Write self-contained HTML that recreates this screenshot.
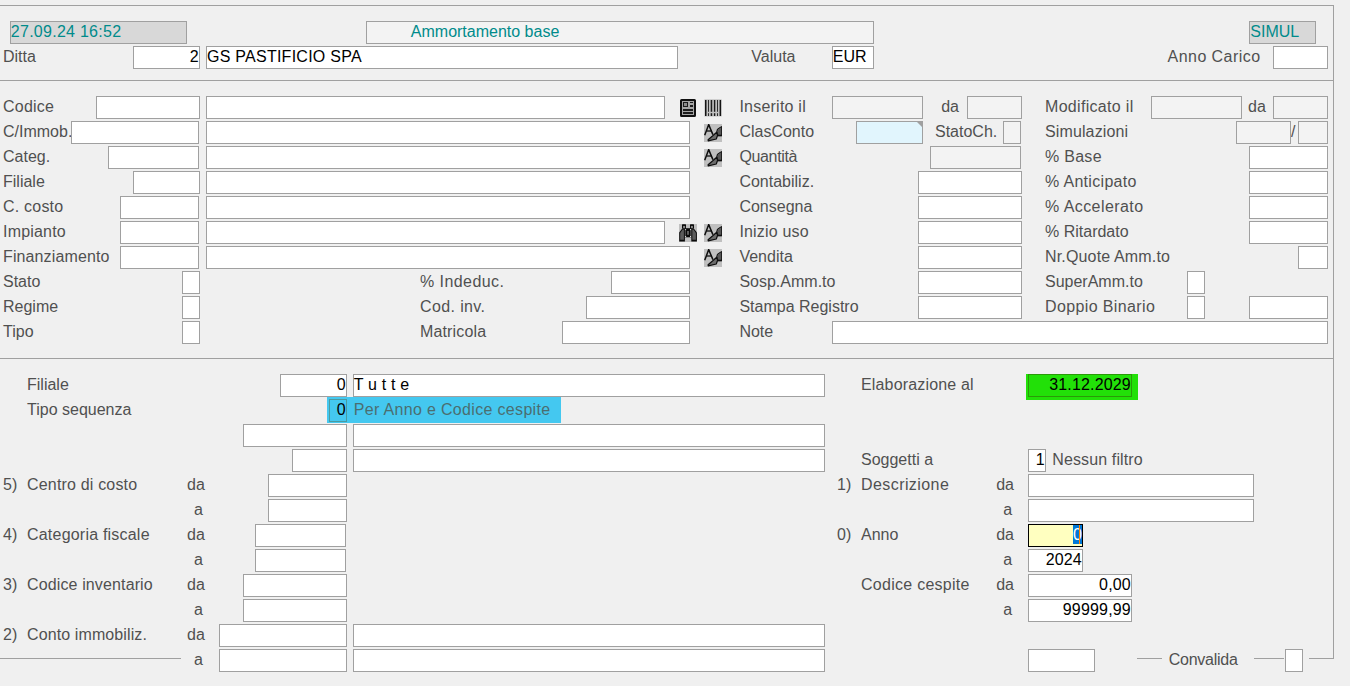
<!DOCTYPE html>
<html lang="it"><head><meta charset="utf-8"><title>Ammortamento base</title>
<style>
html,body{margin:0;padding:0}
body{width:1350px;height:686px;background:#f0f0f0;position:relative;overflow:hidden;font-family:"Liberation Sans",sans-serif;font-size:16px;color:#505050}
.b{position:absolute;box-sizing:border-box;height:23px;border:1px solid #a0a0a0;background:#fff;color:#000;line-height:19px;padding:0 1px 0 1px;white-space:nowrap;overflow:hidden}
.r{text-align:right;padding-right:.1px;letter-spacing:.17px}
.l{position:absolute;height:23px;line-height:21px;white-space:nowrap}
.h{position:absolute;height:1px;background:#a0a0a0}
.v{position:absolute;width:1px;background:#a0a0a0}
.i{position:absolute}
</style></head><body>
<div class="h" style="left:0px;top:5px;width:1334px"></div>
<div class="h" style="left:0px;top:80px;width:1334px"></div>
<div class="h" style="left:0px;top:358px;width:1334px"></div>
<div class="h" style="left:0px;top:658px;width:181px"></div>
<div class="h" style="left:1137px;top:658px;width:25px"></div>
<div class="h" style="left:1254px;top:658px;width:30px"></div>
<div class="h" style="left:1309px;top:658px;width:25px"></div>
<div class="v" style="left:1333px;top:5px;height:654px"></div>
<div class="i" style="left:327px;top:397px;width:234px;height:26px;background:#44c8f0"></div>
<div class="b r" style="left:329px;top:399px;width:18px;background:#44c8f0;border-color:#4b9aa0">0</div>
<div class="i" style="left:1026px;top:374px;width:112px;height:26px;background:#22e008"></div>
<div class="b r" style="left:1028px;top:374px;width:104px;background:#22e008;border-color:#2a9a08">31.12.2029</div>
<div class="b" style="left:1028px;top:524px;width:55px;background:#ffffc0;border-color:#000;padding:0"><span style="position:absolute;right:0;top:0;width:9px;height:19px;background:#0078d7;color:#fff;text-align:right">0</span><span style="position:absolute;left:50px;top:0;width:1px;height:19px;background:#ff8000"></span></div>
<div class="l" style="left:3px;top:46px">Ditta</div>
<div class="l" style="left:751.3px;top:46px">Valuta</div>
<div class="l" style="left:1167.6px;top:46px;letter-spacing:0.44px">Anno Carico</div>
<div class="l" style="left:3px;top:96px;letter-spacing:0.24px">Codice</div>
<div class="l" style="left:3px;top:121px">C/Immob.</div>
<div class="l" style="left:3px;top:146px">Categ.</div>
<div class="l" style="left:3px;top:171px">Filiale</div>
<div class="l" style="left:3px;top:196px;letter-spacing:0.21px">C. costo</div>
<div class="l" style="left:3px;top:221px;letter-spacing:0.20px">Impianto</div>
<div class="l" style="left:3px;top:246px;letter-spacing:0.12px">Finanziamento</div>
<div class="l" style="left:3px;top:271px">Stato</div>
<div class="l" style="left:3px;top:296px">Regime</div>
<div class="l" style="left:3px;top:321px">Tipo</div>
<div class="l" style="left:420px;top:271px;letter-spacing:0.43px">% Indeduc.</div>
<div class="l" style="left:420px;top:296px;letter-spacing:0.38px">Cod. inv.</div>
<div class="l" style="left:420px;top:321px;letter-spacing:0.15px">Matricola</div>
<div class="l" style="left:739.4px;top:96px;letter-spacing:0.23px">Inserito il</div>
<div class="l" style="left:739.4px;top:121px">ClasConto</div>
<div class="l" style="left:739.4px;top:146px;letter-spacing:-0.34px">Quantità</div>
<div class="l" style="left:739.4px;top:171px">Contabiliz.</div>
<div class="l" style="left:739.4px;top:196px">Consegna</div>
<div class="l" style="left:739.4px;top:221px;letter-spacing:0.18px">Inizio uso</div>
<div class="l" style="left:739.4px;top:246px">Vendita</div>
<div class="l" style="left:739.4px;top:271px">Sosp.Amm.to</div>
<div class="l" style="left:739.4px;top:296px">Stampa Registro</div>
<div class="l" style="left:739.4px;top:321px">Note</div>
<div class="l" style="left:941.2px;top:96px">da</div>
<div class="l" style="left:935px;top:121px">StatoCh.</div>
<div class="l" style="left:1045px;top:96px;letter-spacing:0.31px">Modificato il</div>
<div class="l" style="left:1045px;top:121px;letter-spacing:0.12px">Simulazioni</div>
<div class="l" style="left:1045px;top:146px;letter-spacing:0.28px">% Base</div>
<div class="l" style="left:1045px;top:171px;letter-spacing:0.31px">% Anticipato</div>
<div class="l" style="left:1045px;top:196px;letter-spacing:0.43px">% Accelerato</div>
<div class="l" style="left:1045px;top:221px">% Ritardato</div>
<div class="l" style="left:1045px;top:246px;letter-spacing:0.16px">Nr.Quote Amm.to</div>
<div class="l" style="left:1045px;top:271px">SuperAmm.to</div>
<div class="l" style="left:1045px;top:296px;letter-spacing:0.38px">Doppio Binario</div>
<div class="l" style="left:1248.0px;top:96px">da</div>
<div class="l" style="left:1291px;top:121px">/</div>
<div class="l" style="left:27px;top:374px">Filiale</div>
<div class="l" style="left:27px;top:399px">Tipo sequenza</div>
<div class="l" style="left:3px;top:474px">5)</div>
<div class="l" style="left:27px;top:474px;letter-spacing:0.18px">Centro di costo</div>
<div class="l" style="left:187.0px;top:474px">da</div>
<div class="l" style="left:194.0px;top:499px">a</div>
<div class="l" style="left:3px;top:524px">4)</div>
<div class="l" style="left:27px;top:524px;letter-spacing:0.21px">Categoria fiscale</div>
<div class="l" style="left:187.0px;top:524px">da</div>
<div class="l" style="left:194.0px;top:549px">a</div>
<div class="l" style="left:3px;top:574px">3)</div>
<div class="l" style="left:27px;top:574px;letter-spacing:0.13px">Codice inventario</div>
<div class="l" style="left:187.0px;top:574px">da</div>
<div class="l" style="left:194.0px;top:599px">a</div>
<div class="l" style="left:3px;top:624px">2)</div>
<div class="l" style="left:27px;top:624px;letter-spacing:0.11px">Conto immobiliz.</div>
<div class="l" style="left:187.0px;top:624px">da</div>
<div class="l" style="left:194.0px;top:649px">a</div>
<div class="l" style="left:861px;top:374px;letter-spacing:0.16px">Elaborazione al</div>
<div class="l" style="left:861px;top:449px">Soggetti a</div>
<div class="l" style="left:1052.3px;top:449px;letter-spacing:0.12px">Nessun filtro</div>
<div class="l" style="left:837px;top:474px">1)</div>
<div class="l" style="left:861px;top:474px;letter-spacing:0.42px">Descrizione</div>
<div class="l" style="left:996.2px;top:474px">da</div>
<div class="l" style="left:1003.3px;top:499px">a</div>
<div class="l" style="left:837px;top:524px">0)</div>
<div class="l" style="left:861px;top:524px">Anno</div>
<div class="l" style="left:996.2px;top:524px">da</div>
<div class="l" style="left:1003.3px;top:549px">a</div>
<div class="l" style="left:861px;top:574px;letter-spacing:0.27px">Codice cespite</div>
<div class="l" style="left:996.2px;top:574px">da</div>
<div class="l" style="left:1003.3px;top:599px">a</div>
<div class="l" style="left:1168.7px;top:649px;letter-spacing:-0.25px">Convalida</div>
<div class="b" style="left:10px;top:21px;width:177px;background:#d8d8d8"></div>
<div class="b" style="left:366px;top:21px;width:508px;background:#f3f3f3;color:#008b8b"></div>
<div class="b" style="left:1249px;top:21px;width:67px;background:#d8d8d8"></div>
<div class="b r" style="left:133px;top:46px;width:67px">2</div>
<div class="b" style="left:206px;top:46px;width:472px"></div>
<div class="b" style="left:832px;top:46px;width:42px"></div>
<div class="b" style="left:1273px;top:46px;width:55px"></div>
<div class="b" style="left:96px;top:96px;width:104px"></div>
<div class="b" style="left:71px;top:121px;width:128px"></div>
<div class="b" style="left:108px;top:146px;width:91px"></div>
<div class="b" style="left:133px;top:171px;width:67px"></div>
<div class="b" style="left:120px;top:196px;width:79px"></div>
<div class="b" style="left:120px;top:221px;width:79px"></div>
<div class="b" style="left:120px;top:246px;width:79px"></div>
<div class="b" style="left:182px;top:271px;width:18px"></div>
<div class="b" style="left:182px;top:296px;width:18px"></div>
<div class="b" style="left:182px;top:321px;width:18px"></div>
<div class="b" style="left:206px;top:96px;width:459px"></div>
<div class="b" style="left:206px;top:121px;width:484px"></div>
<div class="b" style="left:206px;top:146px;width:484px"></div>
<div class="b" style="left:206px;top:171px;width:484px"></div>
<div class="b" style="left:206px;top:196px;width:484px"></div>
<div class="b" style="left:206px;top:221px;width:459px"></div>
<div class="b" style="left:206px;top:246px;width:484px"></div>
<div class="b" style="left:611px;top:271px;width:79px"></div>
<div class="b" style="left:586px;top:296px;width:104px"></div>
<div class="b" style="left:562px;top:321px;width:128px"></div>
<div class="b" style="left:832px;top:96px;width:91px;background:#f3f3f3"></div>
<div class="b" style="left:967px;top:96px;width:55px;background:#f3f3f3"></div>
<div class="b" style="left:856px;top:121px;width:67px;background:#e1f5fd"></div>
<div class="b" style="left:1003px;top:121px;width:18px;background:#f3f3f3"></div>
<div class="b" style="left:930px;top:146px;width:91px;background:#f3f3f3"></div>
<div class="b" style="left:918px;top:171px;width:104px"></div>
<div class="b" style="left:918px;top:196px;width:104px"></div>
<div class="b" style="left:918px;top:221px;width:104px"></div>
<div class="b" style="left:918px;top:246px;width:104px"></div>
<div class="b" style="left:918px;top:271px;width:104px"></div>
<div class="b" style="left:918px;top:296px;width:104px"></div>
<div class="b" style="left:832px;top:321px;width:496px"></div>
<div class="b" style="left:1151px;top:96px;width:91px;background:#f3f3f3"></div>
<div class="b" style="left:1273px;top:96px;width:55px;background:#f3f3f3"></div>
<div class="b" style="left:1236px;top:121px;width:55px;background:#f3f3f3"></div>
<div class="b" style="left:1298px;top:121px;width:30px;background:#f3f3f3"></div>
<div class="b" style="left:1249px;top:146px;width:79px"></div>
<div class="b" style="left:1249px;top:171px;width:79px"></div>
<div class="b" style="left:1249px;top:196px;width:79px"></div>
<div class="b" style="left:1249px;top:221px;width:79px"></div>
<div class="b" style="left:1298px;top:246px;width:30px"></div>
<div class="b" style="left:1187px;top:271px;width:18px"></div>
<div class="b" style="left:1187px;top:296px;width:18px"></div>
<div class="b" style="left:1249px;top:296px;width:79px"></div>
<div class="b r" style="left:280px;top:374px;width:67px">0</div>
<div class="b" style="left:353px;top:374px;width:472px"></div>
<div class="b" style="left:243px;top:424px;width:104px"></div>
<div class="b" style="left:353px;top:424px;width:472px"></div>
<div class="b" style="left:292px;top:449px;width:55px"></div>
<div class="b" style="left:353px;top:449px;width:472px"></div>
<div class="b" style="left:268px;top:474px;width:79px"></div>
<div class="b" style="left:268px;top:499px;width:79px"></div>
<div class="b" style="left:255px;top:524px;width:91px"></div>
<div class="b" style="left:255px;top:549px;width:91px"></div>
<div class="b" style="left:243px;top:574px;width:104px"></div>
<div class="b" style="left:243px;top:599px;width:104px"></div>
<div class="b" style="left:219px;top:624px;width:128px"></div>
<div class="b" style="left:353px;top:624px;width:472px"></div>
<div class="b" style="left:219px;top:649px;width:128px"></div>
<div class="b" style="left:353px;top:649px;width:472px"></div>
<div class="b r" style="left:1028px;top:449px;width:18px">1</div>
<div class="b" style="left:1028px;top:474px;width:226px"></div>
<div class="b" style="left:1028px;top:499px;width:226px"></div>
<div class="b r" style="left:1028px;top:549px;width:55px">2024</div>
<div class="b r" style="left:1028px;top:574px;width:104px">0,00</div>
<div class="b r" style="left:1028px;top:599px;width:104px">99999,99</div>
<div class="b" style="left:1028px;top:649px;width:67px"></div>
<div class="b" style="left:1285px;top:649px;width:18px"></div>
<div class="l" style="left:410.8px;top:21px;color:#008b8b">Ammortamento base</div>
<div class="l" style="left:10.8px;top:21px;color:#008b8b;letter-spacing:0.27px">27.09.24 16:52</div>
<div class="l" style="left:1250.3px;top:21px;color:#008b8b">SIMUL</div>
<div class="l" style="left:207.0px;top:46px;color:#000;letter-spacing:0.25px">GS PASTIFICIO SPA</div>
<div class="l" style="left:832.8px;top:46px;color:#000">EUR</div>
<div class="l" style="left:353.7px;top:399px;color:#4b6e70;letter-spacing:0.33px">Per Anno e Codice cespite</div>
<div class="l" style="left:353.7px;top:374px;color:#000;letter-spacing:0.20px">T u t t e</div>
<svg class="i" style="left:680px;top:99px" width="16" height="18" viewBox="0 0 16 18">
<rect x="1" y="1" width="14" height="16" rx="0.5" fill="#a6a6a6" stroke="#101010" stroke-width="2"/>
<rect x="3.5" y="3.5" width="4" height="4" fill="#8c8c8c" stroke="#1c1c1c" stroke-width="1"/>
<rect x="10" y="3" width="3" height="1" fill="#1c1c1c"/>
<rect x="10" y="6" width="3" height="2" fill="#1c1c1c"/>
<rect x="3" y="10" width="10" height="2" fill="#1c1c1c"/>
<rect x="3" y="13" width="10" height="2" fill="#1c1c1c"/>
</svg>
<svg class="i" style="left:704px;top:99px" width="18" height="18" viewBox="0 0 18 18">
<rect x="0.4" y="0.3" width="17.2" height="17.2" fill="#c0c0c0"/>
<rect x="1" y="1" width="1.5" height="16" fill="#141414"/>
<rect x="15.6" y="1" width="1.5" height="16" fill="#141414"/>
<g fill="#1c1c1c">
<rect x="4.1" y="1" width="0.9" height="11.8"/><rect x="4.1" y="14.2" width="0.9" height="2.8"/>
<rect x="6.7" y="1" width="1.5" height="11.8"/><rect x="6.7" y="14.2" width="1.5" height="2.8"/>
<rect x="9.9" y="1" width="1.4" height="11.8"/><rect x="9.9" y="14.2" width="1.4" height="2.8"/>
<rect x="13" y="1" width="0.9" height="11.8"/><rect x="13" y="14.2" width="0.9" height="2.8"/>
</g></svg>
<svg class="i" style="left:704px;top:124px" width="18" height="18" viewBox="0 0 18 18">
<rect width="18" height="18" fill="#c0c0c0"/>
<path d="M0.7 11.3 L4.7 0.6 L8.9 10.6" fill="none" stroke="#0e0e0e" stroke-width="1.5" stroke-linejoin="miter"/>
<path d="M4.1 1.2 L5.4 1.2 L5.9 3 L4.7 2.2 Z" fill="#0e0e0e"/>
<path d="M2.7 7 H7.5" stroke="#0e0e0e" stroke-width="1.3"/>
<path d="M17.7 2.5 V11.4 H14 L12.7 7.8 L13.5 5 Z" fill="#565656" stroke="#0e0e0e" stroke-width="1" stroke-linejoin="round"/>
<path d="M12.7 8.3 L13.6 11.3 L12.3 15 L4.2 16.9 L4.1 15.7 L8.5 12 Z" fill="#6c6c6c" stroke="#0e0e0e" stroke-width="1.2" stroke-linejoin="round"/>
<path d="M13.6 11.6 H17.9" stroke="#0e0e0e" stroke-width="1.5"/>
</svg>
<svg class="i" style="left:704px;top:149px" width="18" height="18" viewBox="0 0 18 18">
<rect width="18" height="18" fill="#c0c0c0"/>
<path d="M0.7 11.3 L4.7 0.6 L8.9 10.6" fill="none" stroke="#0e0e0e" stroke-width="1.5" stroke-linejoin="miter"/>
<path d="M4.1 1.2 L5.4 1.2 L5.9 3 L4.7 2.2 Z" fill="#0e0e0e"/>
<path d="M2.7 7 H7.5" stroke="#0e0e0e" stroke-width="1.3"/>
<path d="M17.7 2.5 V11.4 H14 L12.7 7.8 L13.5 5 Z" fill="#565656" stroke="#0e0e0e" stroke-width="1" stroke-linejoin="round"/>
<path d="M12.7 8.3 L13.6 11.3 L12.3 15 L4.2 16.9 L4.1 15.7 L8.5 12 Z" fill="#6c6c6c" stroke="#0e0e0e" stroke-width="1.2" stroke-linejoin="round"/>
<path d="M13.6 11.6 H17.9" stroke="#0e0e0e" stroke-width="1.5"/>
</svg>
<svg class="i" style="left:679px;top:224px" width="18" height="18" viewBox="0 0 18 18">
<rect width="18" height="18" fill="#c0c0c0"/>
<rect x="5.9" y="4.2" width="6.4" height="9.1" fill="#0a0a0a"/>
<path d="M3 4.7 L0.2 8.5 V17.6 H5.9 V4.7 Z" fill="#0a0a0a"/>
<path d="M15 4.7 L17.9 8.5 V17.6 H12.3 V4.7 Z" fill="#0a0a0a"/>
<path d="M3.6 5.6 L1.2 9 V15.7 H4.9 V5.6 Z" fill="#5c5c5c"/>
<path d="M14.4 5.6 L16.9 9 V15.7 H13.3 V5.6 Z" fill="#5c5c5c"/>
<rect x="3" y="0.2" width="4" height="4.6" rx="0.5" fill="#0a0a0a"/>
<rect x="11" y="0.2" width="4" height="4.6" rx="0.5" fill="#0a0a0a"/>
<rect x="4.1" y="1.9" width="2" height="2.1" fill="#8a8a8a"/>
<rect x="11.9" y="1.9" width="2" height="2.1" fill="#8a8a8a"/>
<rect x="8.1" y="7" width="1.8" height="3.8" fill="#686868"/>
<g fill="#606060"><rect x="6.3" y="5.6" width="0.7" height="6.6"/><rect x="11.2" y="5.6" width="0.7" height="6.6"/></g>
<g fill="#e8e8e8"><rect x="6.1" y="5.1" width="1" height="1"/><rect x="11" y="5.1" width="1" height="1"/><rect x="6.1" y="12" width="1" height="1"/><rect x="11" y="12" width="1" height="1"/></g>
</svg>
<svg class="i" style="left:704px;top:224px" width="18" height="18" viewBox="0 0 18 18">
<rect width="18" height="18" fill="#c0c0c0"/>
<path d="M0.7 11.3 L4.7 0.6 L8.9 10.6" fill="none" stroke="#0e0e0e" stroke-width="1.5" stroke-linejoin="miter"/>
<path d="M4.1 1.2 L5.4 1.2 L5.9 3 L4.7 2.2 Z" fill="#0e0e0e"/>
<path d="M2.7 7 H7.5" stroke="#0e0e0e" stroke-width="1.3"/>
<path d="M17.7 2.5 V11.4 H14 L12.7 7.8 L13.5 5 Z" fill="#565656" stroke="#0e0e0e" stroke-width="1" stroke-linejoin="round"/>
<path d="M12.7 8.3 L13.6 11.3 L12.3 15 L4.2 16.9 L4.1 15.7 L8.5 12 Z" fill="#6c6c6c" stroke="#0e0e0e" stroke-width="1.2" stroke-linejoin="round"/>
<path d="M13.6 11.6 H17.9" stroke="#0e0e0e" stroke-width="1.5"/>
</svg>
<svg class="i" style="left:704px;top:249px" width="18" height="18" viewBox="0 0 18 18">
<rect width="18" height="18" fill="#c0c0c0"/>
<path d="M0.7 11.3 L4.7 0.6 L8.9 10.6" fill="none" stroke="#0e0e0e" stroke-width="1.5" stroke-linejoin="miter"/>
<path d="M4.1 1.2 L5.4 1.2 L5.9 3 L4.7 2.2 Z" fill="#0e0e0e"/>
<path d="M2.7 7 H7.5" stroke="#0e0e0e" stroke-width="1.3"/>
<path d="M17.7 2.5 V11.4 H14 L12.7 7.8 L13.5 5 Z" fill="#565656" stroke="#0e0e0e" stroke-width="1" stroke-linejoin="round"/>
<path d="M12.7 8.3 L13.6 11.3 L12.3 15 L4.2 16.9 L4.1 15.7 L8.5 12 Z" fill="#6c6c6c" stroke="#0e0e0e" stroke-width="1.2" stroke-linejoin="round"/>
<path d="M13.6 11.6 H17.9" stroke="#0e0e0e" stroke-width="1.5"/>
</svg>
<svg class="i" style="left:917px;top:122px" width="5" height="5" viewBox="0 0 5 5"><path d="M0 0H5V5Z" fill="#a0a0a0"/></svg>
</body></html>
